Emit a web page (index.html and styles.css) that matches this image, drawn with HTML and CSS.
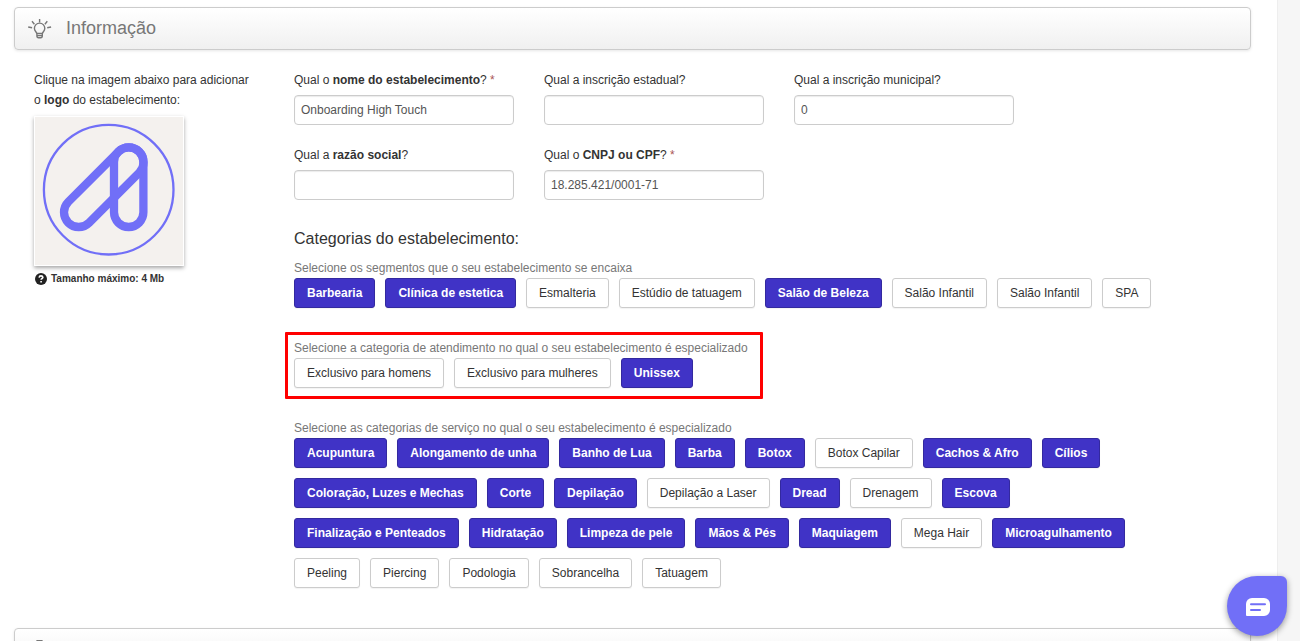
FILE: index.html
```html
<!DOCTYPE html>
<html lang="pt-BR">
<head>
<meta charset="utf-8">
<meta name="viewport" content="width=device-width, initial-scale=1">
<title>Informação do estabelecimento</title>
<link rel="stylesheet" href="styles.css">
</head>
<body>
<div class="page">
  <main class="content">
    <h2 class="section-bar">
      <svg class="section-icon" viewBox="0 0 24 20" aria-hidden="true">
        <path d="M8.800 14.500C8.400 12.800 6.400 12 6.400 9.300a5.200 5.200 0 0 1 10.400 0c0 2.700-2 3.500-2.400 5.200zM8.900 14.500v2.200q0 2 1.600 2h2.200q1.600 0 1.600-2v-2.200M9 16.600h5.200M11.600 0v3.300M4 2.200l2.400 3M19.300 2.200l-2.400 3M.2 8l3.900.8M23.100 8l-3.900.8"/>
      </svg>
      <span>Informação</span>
    </h2>

    <div class="columns">
      <aside class="logo-column">
        <p class="logo-text">Clique na imagem abaixo para adicionar o <strong>logo</strong> do estabelecimento:</p>
        <button class="logo-button" type="button" aria-label="Alterar logo">
          <svg class="logo" viewBox="1 1 148 148" aria-hidden="true">
            <circle cx="74.700" cy="73.700" r="64.800" stroke-width="2.300"/>
            <g stroke-width="8.300">
              <rect x="80" y="31.300" width="29.400" height="79.700" rx="14.700"/>
              <rect x="-14.700" y="-14.700" width="100.300" height="29.400" rx="14.700" transform="translate(44.700 96.300) rotate(-45)"/>
            </g>
          </svg>
        </button>
        <p class="size-note">
          <svg class="help-icon" viewBox="0 0 12 12" aria-hidden="true">
            <circle cx="6" cy="6" r="6"/>
            <path d="M4.100 4.600q.2-1.700 1.900-1.700t1.900 1.400c0 1.200-1.800 1.200-1.800 2.500M6.100 8.100v1.500"/>
          </svg>
          <span>Tamanho máximo: 4 Mb</span>
        </p>
      </aside>

      <form class="form">
        <div class="fields">
          <div class="field">
            <label for="nome">Qual o <strong>nome do estabelecimento</strong>? <span class="required">*</span></label>
            <input id="nome" type="text" value="Onboarding High Touch">
          </div>
          <div class="field">
            <label for="estadual">Qual a inscrição estadual?</label>
            <input id="estadual" type="text">
          </div>
          <div class="field">
            <label for="municipal">Qual a inscrição municipal?</label>
            <input id="municipal" type="text" value="0">
          </div>
          <div class="field">
            <label for="razao">Qual a <strong>razão social</strong>?</label>
            <input id="razao" type="text">
          </div>
          <div class="field">
            <label for="cnpj">Qual o <strong>CNPJ ou CPF</strong>? <span class="required">*</span></label>
            <input id="cnpj" type="text" value="18.285.421/0001-71">
          </div>
        </div>

        <h3 class="subtitle">Categorias do estabelecimento:</h3>

        <section class="group">
          <p class="hint">Selecione os segmentos que o seu estabelecimento se encaixa</p>
          <div class="tags">
            <button type="button" class="tag active">Barbearia</button>
            <button type="button" class="tag active">Clínica de estetica</button>
            <button type="button" class="tag">Esmalteria</button>
            <button type="button" class="tag">Estúdio de tatuagem</button>
            <button type="button" class="tag active">Salão de Beleza</button>
            <button type="button" class="tag">Salão Infantil</button>
            <button type="button" class="tag">Salão Infantil</button>
            <button type="button" class="tag">SPA</button>
          </div>
        </section>

        <section class="group highlighted">
          <p class="hint">Selecione a categoria de atendimento no qual o seu estabelecimento é especializado</p>
          <div class="tags">
            <button type="button" class="tag">Exclusivo para homens</button>
            <button type="button" class="tag">Exclusivo para mulheres</button>
            <button type="button" class="tag active">Unissex</button>
          </div>
        </section>

        <section class="group">
          <p class="hint">Selecione as categorias de serviço no qual o seu estabelecimento é especializado</p>
          <div class="tags">
            <button type="button" class="tag active">Acupuntura</button>
            <button type="button" class="tag active">Alongamento de unha</button>
            <button type="button" class="tag active">Banho de Lua</button>
            <button type="button" class="tag active">Barba</button>
            <button type="button" class="tag active">Botox</button>
            <button type="button" class="tag">Botox Capilar</button>
            <button type="button" class="tag active">Cachos &amp; Afro</button>
            <button type="button" class="tag active">Cílios</button>
            <button type="button" class="tag active">Coloração, Luzes e Mechas</button>
            <button type="button" class="tag active">Corte</button>
            <button type="button" class="tag active">Depilação</button>
            <button type="button" class="tag">Depilação a Laser</button>
            <button type="button" class="tag active">Dread</button>
            <button type="button" class="tag">Drenagem</button>
            <button type="button" class="tag active">Escova</button>
            <button type="button" class="tag active">Finalização e Penteados</button>
            <button type="button" class="tag active">Hidratação</button>
            <button type="button" class="tag active">Limpeza de pele</button>
            <button type="button" class="tag active">Mãos &amp; Pés</button>
            <button type="button" class="tag active">Maquiagem</button>
            <button type="button" class="tag">Mega Hair</button>
            <button type="button" class="tag active">Microagulhamento</button>
            <button type="button" class="tag">Peeling</button>
            <button type="button" class="tag">Piercing</button>
            <button type="button" class="tag">Podologia</button>
            <button type="button" class="tag">Sobrancelha</button>
            <button type="button" class="tag">Tatuagem</button>
          </div>
        </section>
      </form>
    </div>

    <div class="section-bar">
      <svg class="section-icon" viewBox="0 0 24 20" aria-hidden="true">
        <circle class="head" cx="11.500" cy="4" r="4"/>
        <path d="M4 19v-4q0-4 4-4h7q4 0 4 4v4"/>
      </svg>
    </div>
  </main>
</div>

<button class="chat" type="button" aria-label="Abrir chat">
  <svg class="chat-icon" viewBox="0 0 24 18" aria-hidden="true">
    <path class="bubble" d="M6 0h12a6 6 0 0 1 6 6v6a6 6 0 0 1-6 6H1a1 1 0 0 1-1-1V6a6 6 0 0 1 6-6z"/>
    <path class="lines" d="M5 6.300h14M5 12h9"/>
  </svg>
</button>
</body>
</html>
```
FILE: styles.css
```css
* {
  box-sizing: border-box;
}

body {
  margin: 0;
  background: #f6f6f6;
  color: #333;
  font: 12px/20px "Liberation Sans", Arial, sans-serif;
}

p,
h2,
h3 {
  margin: 0;
}

.page {
  height: 100vh;
  overflow: hidden;
  padding-right: 22px;
}

.content {
  min-height: 100%;
  padding: 7px 26px 0 14px;
  background: #fff;
  border-right: 1px solid #eee;
}

.section-bar {
  display: flex;
  align-items: center;
  gap: 14px;
  height: 43px;
  padding: 0 13px 2px;
  border: 1px solid #ccc;
  border-radius: 4px;
  background: linear-gradient(#fff, #f0f0f0);
  box-shadow: 0 1px 3px rgba(0, 0, 0, 0.1);
  color: #777;
  font-size: 18px;
  font-weight: 400;
}

.section-icon {
  width: 24px;
  height: 20px;
  margin-top: 2px;
  fill: none;
  stroke: #777;
  stroke-width: 1.4;
}

.section-icon .head {
  fill: #777;
}

.columns {
  display: flex;
  gap: 40px;
  padding: 20px 80px 40px 20px;
}

.logo-column {
  flex: 0 0 220px;
}

.logo-button {
  display: block;
  width: 150px;
  height: 150px;
  margin-top: 6px;
  padding: 0;
  border: 1px solid #fff;
  background: #f4f1ee;
  box-shadow: 0 2px 4px rgba(0, 0, 0, 0.35);
}

.logo {
  display: block;
  width: 100%;
  fill: none;
  stroke: #716ff7;
}

.size-note {
  display: flex;
  align-items: center;
  gap: 4px;
  margin-top: 3px;
  padding-left: 1px;
  font-size: 10px;
  font-weight: bold;
}

.help-icon {
  width: 12px;
  height: 12px;
  fill: #222;
}

.help-icon path {
  fill: none;
  stroke: #fff;
  stroke-width: 1.6;
}

.form {
  flex: 1;
  min-width: 0;
}

.fields {
  display: grid;
  grid-template-columns: repeat(auto-fill, 220px);
  gap: 20px 30px;
  max-width: 730px;
}

.field {
  display: flex;
  flex-direction: column;
  gap: 5px;
}

.required {
  color: #a55;
}

.field input {
  height: 30px;
  padding: 4px 6px;
  border: 1px solid #ccc;
  border-radius: 4px;
  background: #fff;
  box-shadow: inset 0 1px 1px rgba(0, 0, 0, 0.08);
  color: #555;
  font: inherit;
}

.subtitle {
  margin: 29px 0 9px;
  font-size: 16px;
  font-weight: 400;
}

.group + .group {
  margin-top: 30px;
}

.hint {
  color: #777;
}

.tags {
  display: flex;
  flex-wrap: wrap;
  gap: 10px;
}

.tag {
  height: 30px;
  padding: 0 12px;
  border: 1px solid #ccc;
  border-radius: 3px;
  background: #fff;
  color: #333;
  font: inherit;
  box-shadow: 0 1px 1px rgba(0, 0, 0, 0.05);
}

.tag.active {
  border-color: #33299f;
  background: #4033c6;
  color: #fff;
  font-weight: bold;
}

.highlighted {
  position: relative;
  width: fit-content;
}

.highlighted::after {
  content: "";
  position: absolute;
  inset: -6px -15px -11px -9px;
  border: 3px solid #f00;
  border-radius: 1px;
  pointer-events: none;
}

.chat {
  position: fixed;
  right: 13px;
  bottom: 5px;
  display: grid;
  place-items: center;
  width: 60px;
  height: 60px;
  padding: 2px 0 0 2px;
  border: 0;
  border-radius: 30px 6px 30px 30px;
  background: #716ff7;
  box-shadow: 0 2px 6px rgba(0, 0, 0, 0.4);
}

.chat-icon {
  width: 24px;
  height: 18px;
}

.bubble {
  fill: #fff;
}

.lines {
  fill: none;
  stroke: #716ff7;
  stroke-width: 2;
  stroke-linecap: round;
}
```
